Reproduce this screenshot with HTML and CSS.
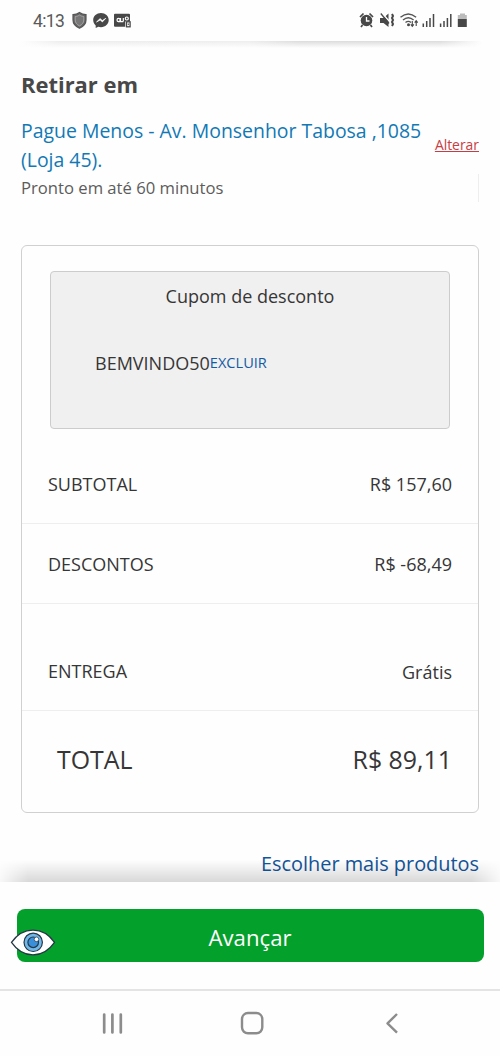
FILE: index.html
```html
<!DOCTYPE html>
<html lang="pt-BR">
<head>
<meta charset="utf-8">
<title>Retirar em</title>
<link rel="stylesheet" href="styles.css">
</head>
<body>
<header class="status">
  <span class="time">4:13</span>
  <svg class="status-left" width="66" height="20" viewBox="70 10 66 20">
    <path d="M79.500 12.500C77 14.300 75 14.600 73 14.600V20c0 3.800 2.600 6.500 6.500 8.200 3.900-1.700 6.500-4.400 6.500-8.200v-5.400c-2 0-4-.3-6.500-2.100z" fill="#666" stroke="#555" stroke-width="1.200"/>
    <path d="M79.500 15c-1.500 1-2.700 1.400-4.300 1.500V20c0 2.700 1.700 4.600 4.300 5.900 2.600-1.300 4.300-3.200 4.300-5.900v-3.500c-1.600-.1-2.800-.5-4.300-1.500z" fill="#777" stroke="#aaa" stroke-width=".9"/>
    <path d="M101 13c-4.400 0-7.800 3-7.800 7.100 0 2.200.9 4 2.500 5.300v2.700l2.600-1.300c.9.300 1.800.4 2.700.4 4.400 0 7.700-3 7.700-7.100S105.400 13 101 13z" fill="#484848"/>
    <path d="M96.500 22l3.600-3.400 2.200 2 3.500-2.300-3.400 3.600-2.200-1.900z" fill="#fff" stroke="#fff" stroke-width=".7"/>
    <path d="M115 13.800h14q1 0 1 1v6.700h-4.800v5.200H115q-1 0-1-1V14.800q0-1 1-1z" fill="#484848"/>
    <g fill="none" stroke="#fff" stroke-width="1.200"><circle cx="118.600" cy="20" r="1.600"/><circle cx="126.800" cy="18.500" r="1.500"/><path d="M118.600 21.700h4.700M120.500 18v3.500M123.300 18v3.500"/></g>
    <rect x="126.500" y="21.800" width="3.600" height="5" fill="#fff" stroke="#484848" stroke-width="1.300"/><path d="M128.300 23.500v1.600" stroke="#484848"/>
  </svg>
  <svg class="status-right" width="112" height="20" viewBox="358 10 112 20">
    <g fill="#484848">
      <circle cx="366.500" cy="20.500" r="5.800"/><path d="M366.500 17v4h3" fill="none" stroke="#fff" stroke-width="1.300"/>
      <path d="M360 17l3.500-3.500M373 17l-3.500-3.500M362.500 25l-1.500 2M370.500 25l1.500 2" stroke="#484848" stroke-width="1.700"/>
      <path d="M380 18h3.500l5-4.500v13.500l-5-4H380z"/><path d="M382 13l7 8" stroke="#fff" stroke-width="1.300"/><path d="M380.800 13.500l8.200 10" stroke="#484848" stroke-width="1.300"/>
      <path d="M392 14l1 2-1 2 1 2-1 2 1 2-1 2" fill="none" stroke="#484848" stroke-width="2"/>
    </g>
    <g fill="none" stroke="#555" stroke-width="1.400"><path d="M400.500 17.300q7.800-6.800 15.600 0M403 20q5.300-4.600 10.600 0M405.500 22.500q2.800-2.300 5.600 0"/></g>
    <circle cx="408.500" cy="24.800" r="1.500" fill="#484848"/>
    <path d="M412.300 21v5M410.800 24.300l1.500 2 1.500-2M416.200 26v-5M414.700 22.700l1.500-2 1.500 2" fill="none" stroke="#484848" stroke-width="1.100"/>
    <g stroke="#484848" stroke-width="1.500"><path d="M423.300 27v-3.500M426.700 27v-6M430 27V18M433.500 27V14M440.600 27v-3.500M444 27v-6M447.400 27V18M450.800 27V14"/></g>
    <path d="M460 13.500h5v1.500h1.800v4h-9v-4h2.200z" fill="#bbb"/><path d="M457.800 19h9v8h-9z" fill="#484848"/>
  </svg>
</header>
<div class="topshade"></div>
<main class="content">
  <h1 class="title">Retirar em</h1>
  <section class="pickup">
    <div class="store">
      <a class="store-name">Pague Menos - Av. Monsenhor Tabosa ,1085 (Loja 45).</a>
      <p class="ready">Pronto em até 60 minutos</p>
    </div>
    <div class="change"><a class="change-link">Alterar</a><i class="rule"></i></div>
  </section>
  <section class="card">
    <div class="coupon">
      <p class="coupon-title">Cupom de desconto</p>
      <p class="coupon-code"><span>BEMVINDO50</span><a class="remove">EXCLUIR</a></p>
    </div>
    <div class="row subtotal"><span>SUBTOTAL</span><span>R$ 157,60</span></div>
    <div class="row"><span>DESCONTOS</span><span>R$ -68,49</span></div>
    <div class="row shipping"><span>ENTREGA</span><span class="free">Grátis</span></div>
    <div class="row total"><span>TOTAL</span><span>R$ 89,11</span></div>
  </section>
  <a class="more">Escolher mais produtos</a>
</main>
<footer class="action">
  <button class="next">Avançar</button>
  <svg class="eye" width="46" height="30" viewBox="0 0 46 30">
    <path d="M1.500 15.300C13-1 33-1 44.500 15.300 33 32 13 32 1.500 15.300z" fill="#fff" stroke="#263746" stroke-width="1.300"/>
    <circle cx="23.200" cy="15.300" r="9.200" fill="#70b8ea" stroke="#263746" stroke-width="1.200"/>
    <circle cx="23.200" cy="15.300" r="5.300" fill="#3a8fdb" stroke="#263746" stroke-width="1.200"/>
    <circle cx="26.500" cy="12.300" r="2.300" fill="#fff" stroke="#263746" stroke-width=".7"/>
  </svg>
</footer>
<nav class="nav">
  <svg width="500" height="65" viewBox="0 991 500 65" fill="none" stroke="#8c8c8c" stroke-linecap="round" stroke-linejoin="round">
    <path d="M104.200 1014.500v18M112.400 1014.500v18M120.800 1014.500v18" stroke-width="2.700"/>
    <rect x="242" y="1013" width="20.300" height="20.300" rx="6" stroke-width="2.400"/>
    <path d="M397 1014l-9.500 9.300 9.500 9.300" stroke-width="2.400" stroke-linecap="butt"/>
  </svg>
</nav>
</body>
</html>
```
FILE: styles.css
```css
* { box-sizing: border-box; }
body { margin: 0; width: 500px; height: 1056px; overflow: hidden; display: flex; flex-direction: column; background: #fefefe; color: #363636; font-family: "Open Sans", "Noto Sans", sans-serif; font-size: 18px; }
h1, p { margin: 0; }
.status { height: 41px; display: flex; align-items: center; padding: 0 30px 1px 33px; flex: none; }
.time { font: 400 17.500px/20px Roboto, sans-serif; color: #5a5a5a; width: 37px; letter-spacing: -.6px; padding-top: 1px; }
.status-right { margin-left: auto; }
.topshade { flex: none; height: 7px; background: linear-gradient(to bottom, transparent, #fefefe), linear-gradient(to right, #fefefe 20px, #ededed 60px, #eeeeee 250px, #dcdcdc 300px, #dcdcdc 440px, #fefefe 482px); }
.content { flex: 1; display: flex; flex-direction: column; padding: 22px 21px 0; }
.title { font-size: 21.950px; line-height: 30px; font-weight: 700; color: #484848; }
.pickup { display: flex; margin-top: 16px; height: 92px; }
.store { flex: 1; }
.store-name { display: block; font-size: 19.450px; line-height: 29px; color: #1279b5; width: 408px; }
.ready { font-size: 16.650px; line-height: 27px; color: #5c5c5c; }
.change { display: flex; flex-direction: column; align-items: flex-end; padding-top: 18px; }
.change-link { font-size: 13.900px; line-height: 22px; color: #c83c42; text-decoration: underline; }
.rule { width: 1px; height: 28px; margin-top: 18px; background: #eee; }
.card { margin-top: 37px; height: 568px; border: 1.500px solid #d0d0d0; border-radius: 6px; display: flex; flex-direction: column; flex: none; }
.coupon { height: 158px; margin: 25px 28px 0; padding: 11px 44px; border: 1px solid #ccc; border-radius: 4px; background: #f0f0f0; }
.coupon-title { line-height: 26px; text-align: center; }
.coupon-code { display: flex; align-items: center; line-height: 26px; margin-top: 41px; }
.remove { font-size: 14.600px; line-height: 24px; padding-bottom: 2px; color: #145ba4; }
.row { height: 80px; padding: 0 26px; display: flex; align-items: center; justify-content: space-between; border-bottom: 1px solid #eee; }
.subtotal { height: 95px; padding-top: 16px; }
.shipping { height: 107px; padding-top: 28px; }
.free { padding-top: 2px; }
.total { height: 100px; padding: 0 26px 5px 35px; font-size: 24.900px; border: 0; }
.more { align-self: flex-end; margin-top: 36px; font-size: 19.900px; line-height: 30px; color: #13559b; }
.action { position: relative; flex: none; height: 107px; padding: 27px 16.500px 0; background: #fefefe; }
.action::before { content: ""; position: absolute; left: 0; right: 0; top: -22px; height: 22px; background: linear-gradient(to bottom, transparent, rgba(0, 0, 0, .15)); -webkit-mask-image: linear-gradient(to right, rgba(0, 0, 0, .15), #000 28px, #000 472px, rgba(0, 0, 0, .15)); }
.next { display: block; width: 100%; height: 53px; border: 0; border-radius: 8px; background: #04a02c; color: #fff; font: 22.200px/30px "Open Sans", sans-serif; padding: 5px 0 0; }
.eye { position: absolute; left: 10px; top: 45px; }
.nav { flex: none; height: 67px; border-top: 2px solid #e4e4e4; }
.nav svg { display: block; }
```
